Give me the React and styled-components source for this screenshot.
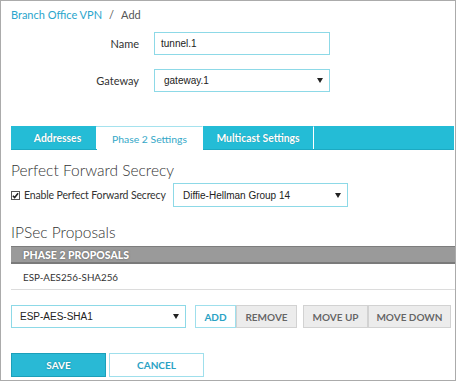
import React from 'react';
import styled, { createGlobalStyle } from 'styled-components';

const Global = createGlobalStyle`
  html, body { margin: 0; padding: 0; background: #fff; }
  body { font-family: Lato, "Open Sans", sans-serif; }
  * { box-sizing: border-box; }
`;

const CYAN = '#24bcd6';

const Page = styled.div`
  width: 456px;
  height: 381px;
  border: 1px solid #ababab;
  padding: 0 0 0 10px;
  overflow: hidden;
  color: #333;
  white-space: nowrap;
`;

const Crumbs = styled.div`
  padding-top: 6px;
  height: 22px;
  line-height: 16px;
  font-size: 11px;
  display: flex;
  gap: 7px;
  color: #555;
`;

const CrumbLink = styled.span`
  color: #2aa5cc;
`;

const FormGrid = styled.div`
  margin-top: 9px;
  display: grid;
  grid-template-columns: 128px 176px;
  column-gap: 15px;
  row-gap: 14px;
  align-items: center;
`;

const Label = styled.div`
  text-align: right;
  font-size: 11px;
  color: #333;
`;

const Field = styled.div`
  width: ${p => p.$w}px;
  height: ${p => p.$h || 23}px;
  border: 1px solid #8dd9e7;
  display: flex;
  align-items: center;
  padding: 0 5px 0 ${p => p.$pad}px;
  font-family: "Liberation Sans", Arial, sans-serif;
  font-size: 10px;
  color: #222;
  flex: none;
`;

const Arrow = styled.span`
  margin-left: auto;
  width: 0;
  height: 0;
  border-left: 3px solid transparent;
  border-right: 3px solid transparent;
  border-top: 5px solid #222;
  margin-right: 1px;
`;

const TabBar = styled.div`
  margin-top: 34px;
  margin-right: 1px;
  height: 24px;
  background: ${CYAN};
  border-bottom: 1px solid #1ca9c2;
  display: flex;
`;

const Tab = styled.div`
  width: ${p => p.$w}px;
  height: ${p => (p.$active ? 24 : 23)}px;
  padding-left: ${p => p.$pl || 0}px;
  border-right: 1px solid #fff;
  display: flex;
  align-items: center;
  justify-content: center;
  font-size: 10.4px;
  font-weight: ${p => (p.$active ? 400 : 700)};
  color: ${p => (p.$active ? '#35a8c8' : '#fff')};
  background: ${p => (p.$active ? '#fff' : 'transparent')};
  border-top: 1px solid ${p => (p.$active ? '#a5e2ee' : CYAN)};
  text-shadow: ${p => (p.$active ? 'none' : '0 0 1px rgba(0,0,0,0.25)')};
`;

const Heading = styled.div`
  margin-top: ${p => p.$mt}px;
  height: 20px;
  line-height: 20px;
  font-size: 15.5px;
  font-weight: 300;
  color: #333;
`;

const PfsRow = styled.div`
  margin-top: 3px;
  display: flex;
  align-items: center;
`;

const Check = styled.span`
  width: 9px;
  height: 9px;
  border: 1px solid #555;
  background: #fff;
  display: inline-flex;
  align-items: center;
  justify-content: center;
  margin: 0 4px 0 0;
  flex: none;
`;

const CheckLabel = styled.span`
  font-size: 10.5px;
  letter-spacing: -0.15px;
  color: #333;
  width: 149px;
  flex: none;
`;

const TableHead = styled.div`
  margin-top: 4px;
  height: 18px;
  background: #9a9a9a;
  border-top: 1px solid #7d7d7d;
  border-bottom: 2px solid #7a7a7a;
  padding-left: 12px;
  display: flex;
  align-items: center;
  font-size: 10.5px;
  font-weight: 900;
  color: #fff;
  text-shadow: 0 0 2px #555;
`;

const TableRow = styled.div`
  height: 26px;
  border-bottom: 1px solid #dcdcdc;
  padding-left: 12px;
  display: flex;
  align-items: center;
  font-size: 9.8px;
  color: #333;
`;

const Controls = styled.div`
  margin-top: 15px;
  display: flex;
  align-items: center;
`;

const Btn = styled.div`
  width: ${p => p.$w}px;
  height: ${p => p.$h || 23}px;
  margin-left: ${p => p.$ml || 0}px;
  display: flex;
  align-items: center;
  justify-content: center;
  font-size: 10px;
  font-weight: 700;
  text-transform: uppercase;
  flex: none;
  ${p =>
    p.$variant === 'outline'
      ? `background:#fff; border:1px solid #9fdfec; color:#2aa2c4;`
      : p.$variant === 'primary'
      ? `background:#29b9d5; border:1px solid #1b9fb9; color:#fff; text-shadow:0 0 2px rgba(0,0,0,0.35);`
      : `background:#ececec; border:1px solid #d2d2d2; color:#666; text-shadow:0 0 1px #fff;`}
`;

const Footer = styled.div`
  margin-top: 25px;
  display: flex;
  gap: 3px;
`;

export default function App() {
  return (
    <>
      <Global />
      <Page>
        <Crumbs>
          <CrumbLink>Branch Office VPN</CrumbLink>
          <span>/</span>
          <span>Add</span>
        </Crumbs>
        <FormGrid>
          <Label>Name</Label>
          <Field $w={176} $pad={6}>tunnel.1</Field>
          <Label>Gateway</Label>
          <Field $w={176} $pad={9}>gateway.1<Arrow /></Field>
        </FormGrid>
        <TabBar>
          <Tab $w={86} $pl={8}>Addresses</Tab>
          <Tab $w={106} $active>Phase 2 Settings</Tab>
          <Tab $w={111}>Multicast Settings</Tab>
        </TabBar>
        <Heading $mt={10}>Perfect Forward Secrecy</Heading>
        <PfsRow>
          <Check>
            <svg width="7" height="7" viewBox="0 0 8 8">
              <path d="M1 4.2 L3 6.3 L7 1.5" fill="none" stroke="#222" strokeWidth="1.8" />
            </svg>
          </Check>
          <CheckLabel>Enable Perfect Forward Secrecy</CheckLabel>
          <Field $w={175} $h={24} $pad={9}>Diffie-Hellman Group 14<Arrow /></Field>
        </PfsRow>
        <Heading $mt={15}>IPSec Proposals</Heading>
        <TableHead>PHASE 2 PROPOSALS</TableHead>
        <TableRow>ESP-AES256-SHA256</TableRow>
        <Controls>
          <Field $w={175} $pad={8}>ESP-AES-SHA1<Arrow /></Field>
          <Btn $w={41} $ml={9} $variant="outline">Add</Btn>
          <Btn $w={61}>Remove</Btn>
          <Btn $w={65} $ml={6}>Move Up</Btn>
          <Btn $w={83}>Move Down</Btn>
        </Controls>
        <Footer>
          <Btn $w={95} $h={24} $variant="primary">Save</Btn>
          <Btn $w={95} $h={24} $variant="outline">Cancel</Btn>
        </Footer>
      </Page>
    </>
  );
}
